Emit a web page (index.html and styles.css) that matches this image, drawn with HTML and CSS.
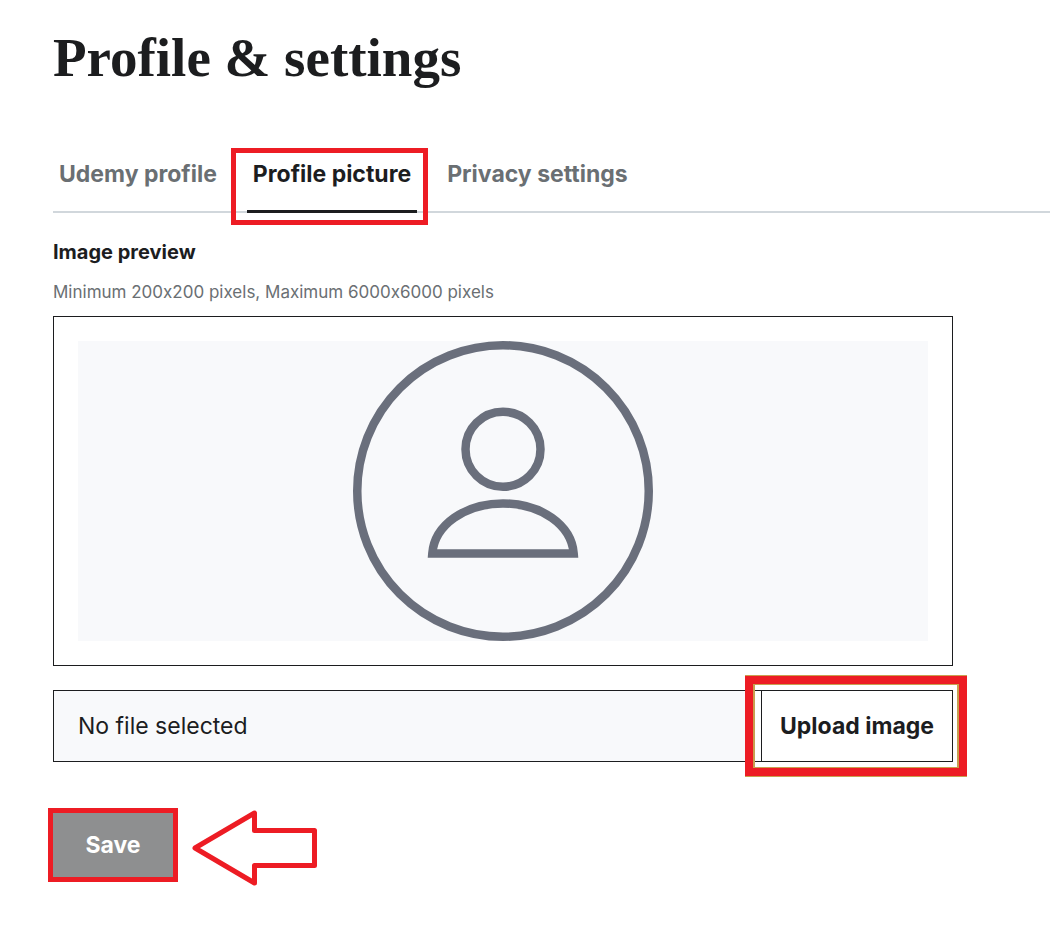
FILE: index.html
```
<!DOCTYPE html>
<html lang="en">
<head>
<meta charset="utf-8">
<title>Profile &amp; settings</title>
<link rel="stylesheet" href="styles.css">
</head>
<body>
<main class="page">
  <h1 class="title">Profile &amp; settings</h1>
  <nav class="tabs" aria-label="Profile sections">
    <button class="tab" type="button">Udemy profile</button>
    <button class="tab tab-active" type="button" aria-current="page">Profile picture</button>
    <button class="tab" type="button">Privacy settings</button>
  </nav>
  <form class="form">
    <h2 class="label">Image preview</h2>
    <p class="hint">Minimum 200x200 pixels, Maximum 6000x6000 pixels</p>
    <div class="preview">
      <div class="preview-area">
        <svg class="avatar" viewBox="0 0 300 300" role="img" aria-label="Default avatar">
          <g fill="none" stroke="#6a6f7c" stroke-width="8.5">
            <circle cx="150" cy="150" r="145.75"/>
            <circle cx="150" cy="108.3" r="37.5"/>
            <path d="M79.3 212.5C81.500 184 112 162.500 150 162.500S218.500 184 220.700 212.500Z"/>
          </g>
        </svg>
      </div>
    </div>
    <div class="file-row">
      <input class="file-name" type="text" value="No file selected" aria-label="Selected file" readonly>
      <div class="upload-cell">
        <button class="upload" type="button">Upload image</button>
      </div>
    </div>
    <div class="actions">
      <button class="save" type="submit">Save</button>
      <svg class="arrow" viewBox="0 0 126 82" aria-hidden="true">
        <path d="M3 44L62.500 9V26.500H122.500V61.500H62.500V79Z" fill="#fff" stroke="#ed1c24" stroke-width="5" stroke-linejoin="round"/>
      </svg>
    </div>
  </form>
</main>
</body>
</html>
```
FILE: styles.css
```
* {
  box-sizing: border-box;
}

body {
  margin: 0;
  background: #fff;
  color: #1c1d1f;
  font-family: Inter, "Liberation Sans", Arial, sans-serif;
  font-variant-ligatures: no-contextual;
}

button,
input {
  font-family: inherit;
  border-radius: 0;
}

.page {
  padding: 28px 0 48px 53px;
}

.title {
  margin: 0;
  font: bold 55px/60px "Liberation Serif", "Times New Roman", serif;
}

.tabs {
  display: flex;
  gap: 24px;
  margin-top: 60px;
  box-shadow: inset 0 -2px #d1d7dc;
}

.tab {
  position: relative;
  height: 65px;
  padding: 12px 6px 22px;
  border: 0;
  border-bottom: 3px solid transparent;
  background: none;
  color: #6a6f73;
  font-size: 23px;
  font-weight: bold;
  line-height: 28px;
}

.tab-active {
  border-bottom-color: #1c1d1f;
  color: #1c1d1f;
}

.tab-active::after {
  content: "";
  position: absolute;
  inset: 0 -11px -15px -16px;
  border: 5px solid #ed1c24;
}

.form {
  max-width: 900px;
  margin-top: 25px;
}

.label {
  margin: 0;
  font-size: 20px;
  line-height: 28px;
}

.hint {
  margin: 12px 0 10px;
  color: #6a6f73;
  font-size: 17px;
  line-height: 28px;
}

.preview {
  padding: 24px;
  border: 1px solid #1c1d1f;
}

.preview-area {
  display: flex;
  justify-content: center;
  background: #f8f9fb;
}

.avatar {
  display: block;
  width: 300px;
}

.file-row {
  display: flex;
  height: 72px;
  margin-top: 24px;
}

.file-name {
  flex: 1;
  min-width: 0;
  padding: 0 24px;
  border: 1px solid #1c1d1f;
  border-right: 0;
  background: #f8f9fb;
  color: #1c1d1f;
  font-size: 23px;
}

.upload-cell {
  position: relative;
  display: flex;
  padding-left: 10px;
  border: solid #1c1d1f;
  border-width: 1px 1px 1px 0;
}

.upload-cell::after {
  content: "";
  position: absolute;
  inset: -15px -15px -15px -6px;
  border: 8px solid #ed1c24;
  box-shadow:
    0 -1px #c8a050,
    0 1px #c8a050,
    inset 2px 1px #c8a050,
    inset -2px -1px #c8a050;
  pointer-events: none;
}

.upload {
  padding: 0 18px;
  border: 0;
  border-left: 1px solid #1c1d1f;
  background: #fff;
  color: #1c1d1f;
  font-size: 23px;
  font-weight: bold;
}

.actions {
  display: flex;
  align-items: center;
  gap: 14px;
  margin: 42px 0 0 -5px;
}

.save {
  width: 130px;
  height: 74px;
  border: 5px solid #ed1c24;
  background: #8e8f90;
  color: #fff;
  font-size: 23px;
  font-weight: bold;
}

.arrow {
  display: block;
  width: 126px;
}
```
